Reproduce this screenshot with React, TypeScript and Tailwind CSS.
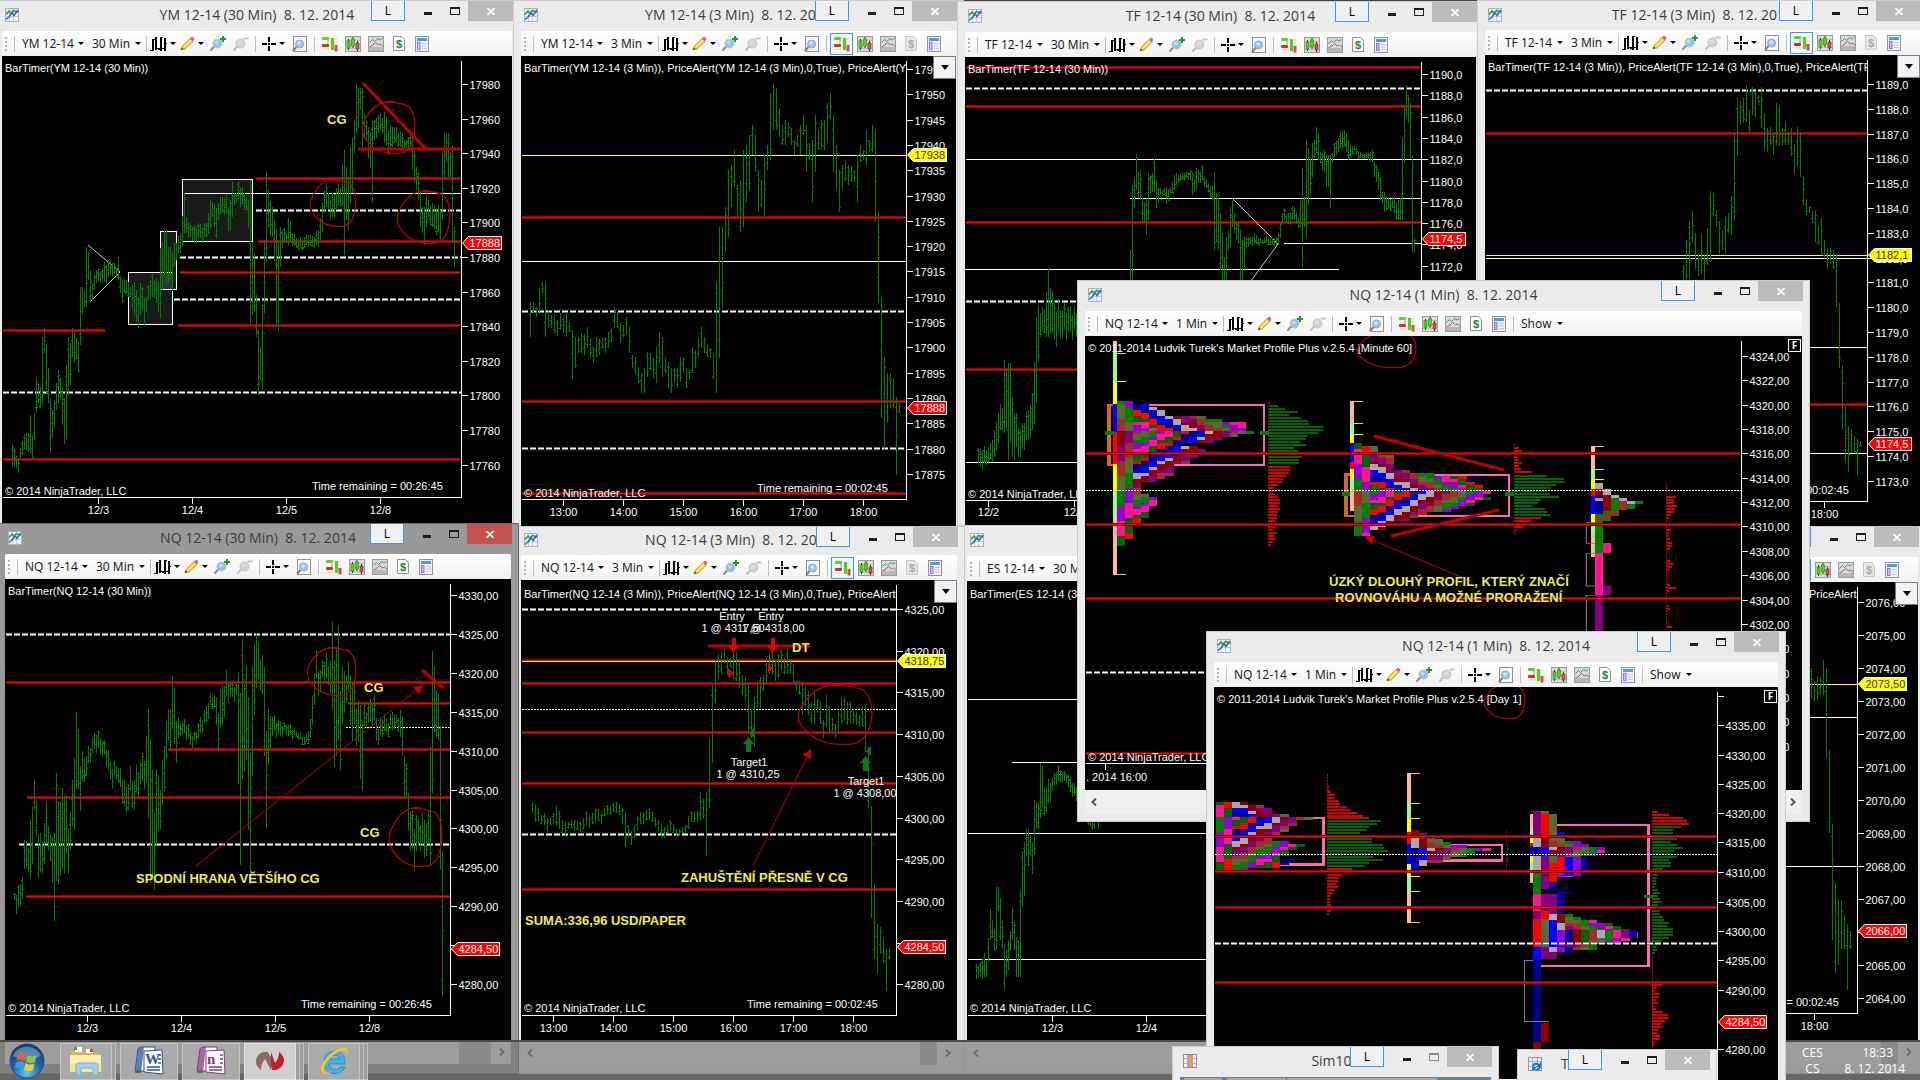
import React from "react";

/* ------------------------------------------------------------------ types */

type LineKind = "red" | "white" | "dash" | "dot" | "yellow";
type Line = [LineKind, number, number?, number?];
type Mark = [string, number];
type Tag = { text: string; y: number; kind: "red" | "yellow" };
type Grid = { ox: number; oy: number; kx: number; ky: number };
type Series = { grid: Grid; step: number; runs: number[][] };

const MAROON = "#8b0000";
const ANNOT = "#c00000";

/* ------------------------------------------------------------ price series */
/* every run is a flat list of x, high, low triples on the series' own grid */

const ym30: number[][] = [
  [37,1332,1397,43,1345,1400,49,1368,1405,55,1375,1418,61,1345,1380,67,1323,1365,79,1300,1350,88,1300,1360,91,1245,1360,97,1305,1378,103,1240,1320,109,1130,1240,115,1150,1210,121,1160,1225,127,1010,1215,133,985,1060,139,1033,1180,145,1105,1210,151,1197,1355,157,1230,1315,163,1200,1280,169,1150,1230,175,1110,1210,181,1130,1200,187,1165,1275,193,1195,1332,199,1095,1320,205,1010,1185,211,1030,1155,217,985,1070,223,1000,1085,229,1010,1080,235,1025,1120,241,860,1035,247,860,942,253,870,920,259,740,920,265,755,840,271,810,908,277,850,900,289,810,850,301,815,850,313,785,845,325,780,830,337,790,830,349,805,830,355,770,840,361,830,880,367,838,908,373,840,880,385,845,890,391,860,890,403,845,950,409,870,965,415,890,983,421,850,945,427,860,930,433,890,976,439,890,935,445,855,900,457,820,890,463,840,895,475,845,935,481,745,955,487,725,870,493,690,830,499,690,850,505,740,850,511,740,840,517,755,872,523,730,800,529,730,780,541,700,760,547,648,740,553,580,700,559,650,700,565,665,715,571,675,710,583,675,725,595,670,715,607,685,728,619,670,710,631,600,685,637,605,650,649,625,715,655,610,660,667,590,640,679,585,640,685,620,693,691,600,690,697,545,650,703,580,615,709,580,610,715,545,600,721,565,620,733,580,630,739,590,630,745,600,685,751,540,975,757,725,945,763,760,935,769,885,1010,775,990,1185,781,1040,1140,787,915,1170,793,720,940,799,515,785,805,570,680,811,600,710,817,620,710,823,660,785,829,690,980,835,730,992,841,680,800,847,690,745,859,700,730,865,655,735,877,700,740,889,715,745,901,710,745,913,710,745,925,705,740,943,710,745,955,690,740,961,655,720,967,610,695,973,570,640,979,550,620,985,580,630,991,600,660,997,580,650,1009,565,630,1021,560,620,1027,490,620,1033,450,765,1039,500,660,1045,530,690,1051,440,610,1057,415,580,1063,360,460,1069,250,400,1075,265,385,1081,265,330,1087,265,440,1093,340,410,1099,360,420,1105,380,475,1111,395,505,1117,360,605,1123,360,420,1135,345,400,1147,355,400,1153,335,430,1165,390,465,1171,375,445,1183,380,430,1195,400,440,1207,400,450,1219,420,445,1231,400,440,1237,410,510,1243,450,545,1249,500,570,1255,520,600,1261,575,680,1267,620,700,1273,620,735,1279,570,680,1285,600,655,1297,610,680,1309,630,705,1321,630,720,1327,460,660,1333,395,540,1339,400,485,1345,400,530,1351,455,530,1357,435,725,1363,680,800],
];

const ym3: number[][] = [
  [31,905,1012,40,905,940,49,920,950,58,865,935,67,845,880,76,845,1012,85,930,985,94,945,985,103,950,998,130,950,1000,139,935,1012,148,965,995,157,990,1137,166,1010,1105,175,1010,1060,184,1000,1060,202,980,1045,211,1015,1070,220,1040,1090,229,1010,1070,247,1010,1045,256,1010,1060,265,995,1045,274,985,1025,283,920,985,292,935,985,301,970,1028,310,975,1010,319,950,1005,328,980,1060,337,1065,1105,346,1070,1125,355,1100,1150,364,1120,1180,373,1105,1180,382,1055,1130,391,1060,1110,400,1075,1135,409,1040,1150,418,995,1090,427,1010,1130,436,1075,1120,445,1085,1165,454,1105,1180,463,1105,1145,472,1105,1165,481,1070,1145,490,1070,1120,499,1105,1165,508,1110,1140,517,1040,1120,526,1050,1105,535,1010,1070,544,980,1045,553,1010,1060,571,1045,1075,580,1060,1137,589,845,1180,598,680,1075,607,680,925,616,620,755,625,510,710,634,495,620,643,450,560,652,555,650,661,540,695,670,450,680,679,435,605,688,405,570,697,375,465,706,405,515,715,510,635,724,540,620,733,465,652,742,435,510,751,280,480,760,252,390,769,265,390,778,325,410,787,375,435,796,360,435,805,365,410,814,385,435,823,420,465,832,405,440,841,375,465,850,345,405,859,375,515,868,430,480,877,420,605,886,345,515,895,390,450,904,360,450,913,360,450,922,310,425,931,280,360,940,345,515,949,435,570,958,510,635,967,495,570,976,480,545,985,495,555,1003,510,545,1012,465,605,1021,435,485,1030,450,480,1039,390,495,1048,420,455,1057,375,455,1066,390,665,1075,632,910,1084,890,1255,1093,1070,1350,1102,1120,1270,1111,1120,1225,1120,1135,1225,1129,1190,1425,1138,1210,1240],
];

const tf30: number[][] = [
  [55,1345,1395,67,1350,1410,79,1350,1395,91,1330,1380,103,1290,1370,115,1240,1330,127,1225,1290,133,1080,1300,139,1110,1290,145,1090,1380,157,1190,1370,169,1240,1340,181,1290,1370,193,1270,1350,205,1230,1320,217,1180,1290,229,950,1210,241,940,1010,253,930,1000,265,808,1010,271,865,1000,283,900,1020,301,930,1010,325,920,1000,349,940,1010],
  [511,750,900,517,555,840,523,535,625,529,462,570,535,515,595,541,510,600,547,595,665,553,605,670,559,600,705,565,520,660,571,525,580,577,520,575,583,478,575,589,540,625,595,565,610,601,565,585,613,565,585,619,560,612,631,560,580,643,525,570,655,525,550,667,520,540,679,515,535,691,510,540,697,520,585,703,540,575,709,505,570,715,510,550,721,515,550,727,495,540,733,530,560,745,550,575,757,555,600,763,515,750,769,580,725,775,595,750,781,640,810,787,700,900,793,770,900,799,710,840,805,690,750,811,620,740,817,600,680,823,640,700,829,665,720,835,670,730,841,690,900,847,720,900,853,710,800,859,710,745,871,710,735,883,700,730,895,715,735,907,720,730,919,705,725,931,715,735,949,710,735,955,700,735,961,665,715,967,640,670,973,625,660,979,645,670,991,635,675,1003,620,660,1015,655,685,1021,600,680,1027,505,800,1033,590,680,1039,420,715,1045,445,615,1051,470,580,1057,430,530,1063,420,475,1069,380,460,1075,400,480,1081,455,490,1087,460,510,1093,450,515,1099,465,560,1105,465,560,1111,465,625,1117,460,490,1123,430,470,1135,415,455,1147,390,450,1153,390,440,1165,420,480,1171,435,470,1183,435,450,1195,455,478,1207,460,475,1219,460,475,1237,450,490,1243,485,530,1249,495,545,1261,530,600,1267,575,610,1273,575,635,1285,590,625,1297,590,625,1303,595,640,1315,600,660,1321,595,660,1327,415,660,1333,315,490,1339,255,350,1345,285,370,1351,310,475,1357,465,755,1363,715,760],
];

const tf3: number[][] = [
  [640,785,870,649,710,850,658,655,825,667,625,720,676,690,795,685,750,815,694,690,810,703,750,870,712,675,785,721,565,765,730,570,640,739,625,670,748,655,750,757,680,740,766,640,750,775,630,690,784,580,695,793,390,655,802,288,460,811,300,370,820,290,365,829,250,360,838,325,390,847,258,340,856,270,345,865,285,310,874,258,380,883,335,445,892,380,450,901,375,430,910,390,458,919,305,430,928,310,430,937,380,430,946,360,430,955,390,430,964,380,460,973,425,515,982,375,490,991,390,525,1000,520,605,1009,590,635,1018,610,630,1027,625,660,1036,625,715,1045,665,725,1054,645,750,1063,710,760,1072,735,795,1081,735,780,1090,740,795,1099,750,910,1108,895,1090,1117,1080,1270,1126,1200,1370,1135,1260,1395,1144,1270,1340,1153,1290,1340,1162,1300,1410,1171,1305,1320],
];

const nq30: number[][] = [
  [43,1045,1065,52,1045,1117,58,1020,1080,64,1020,1080,70,960,1025,76,860,960,82,905,955,88,930,1015,94,770,1018,100,728,800,106,750,850,112,810,920,118,915,1055,124,900,980,130,870,970,136,830,960,142,785,890,148,885,910,154,880,1010,160,885,1015,166,835,1195,172,740,985,178,745,970,184,850,1042,190,700,960,196,735,905,202,870,1025,208,840,945,214,770,880,220,735,880,226,545,795,232,560,740,238,650,805,244,660,760,250,670,740,262,650,700,274,620,660,286,590,640,298,600,650,310,620,660,322,640,690,334,690,745,346,680,720,358,695,740,370,725,800,376,745,820,382,760,830,388,690,770,394,720,780,400,735,820,412,690,765,424,685,745,430,625,720,436,690,750,442,545,750,448,462,865,454,745,1140,460,795,1000,466,750,980,472,705,905,478,730,840,484,745,855,490,645,790,496,580,690,502,540,640,508,550,630,514,480,610,520,430,600,526,510,655,532,570,660,538,570,600,550,560,600,562,570,610,574,600,635,586,600,625,598,560,610,610,550,580,622,510,560,634,490,520,646,490,530,652,510,630,658,520,610,664,460,580,670,460,555,682,435,500,694,465,500,700,455,500,712,470,500,718,390,975,724,460,840,730,365,770,736,365,480,742,470,880,748,600,930,754,570,980,760,410,620,766,245,440,772,355,465,778,375,475,784,365,435,790,405,550,796,440,795,802,600,790,808,530,660,814,545,600,826,560,600,838,565,610,850,570,595,862,570,600,874,580,610,886,590,605,898,595,615,910,610,630,922,595,625,934,550,610,940,440,540,946,380,460,952,385,460,958,440,500,964,400,460,970,405,440,976,375,450,982,390,460,988,430,465,994,350,490,1000,280,635,1006,400,640,1012,310,680,1018,390,660,1024,450,620,1030,430,580,1036,415,500,1042,435,500,1048,390,480,1054,450,640,1060,470,600,1066,475,580,1072,540,640,1078,510,640,1084,520,805,1090,530,640,1096,540,580,1102,520,570,1114,505,570,1120,490,550,1126,510,600,1132,590,630,1138,570,620,1150,540,590,1162,565,605,1180,530,580,1192,560,580,1204,525,620,1210,590,720,1216,680,790,1222,725,810,1228,790,920,1234,815,910,1240,850,970,1246,830,945,1258,850,910,1264,840,920,1276,830,945,1282,850,920,1288,800,920,1294,420,965,1300,430,680,1306,420,540,1312,490,630,1318,545,660,1324,580,1275,1330,1200,1320],
];

const nq3: number[][] = [
  [37,790,820,46,795,845,55,805,845,64,825,850,73,820,855,82,835,880,91,835,855,100,820,850,109,800,855,118,815,865,127,840,880,136,845,885,145,845,865,163,840,870,181,845,870,199,815,855,217,820,850,226,805,845,244,820,850,253,805,830,271,800,825,289,790,820,298,795,825,307,805,850,316,815,915,325,855,890,334,870,910,343,855,890,352,830,870,370,820,850,388,805,840,397,815,845,406,835,860,415,840,870,424,850,890,442,855,875,451,840,870,460,850,875,469,865,885,487,860,875,496,855,875,505,830,865,514,815,845,532,815,845,541,762,840,550,780,835,559,762,940,568,610,805,577,455,680,586,390,515,595,375,445,604,370,430,613,360,400,622,385,435,631,385,415,640,370,445,649,370,450,658,395,470,667,435,490,676,440,510,685,455,600,694,530,610,703,495,635,712,460,525,721,440,525,730,435,480,739,385,460,748,375,430,757,370,430,766,390,450,775,375,445,784,360,420,793,385,430,802,360,430,811,390,430,820,400,460,829,450,480,838,450,490,847,450,545,856,465,520,865,480,545,874,510,570,883,475,570,892,500,540,901,510,570,910,560,610,919,490,580,928,520,600,937,555,595,946,570,610,955,535,600,964,495,570,973,495,560,982,510,575,991,510,570,1000,530,570,1018,545,580,1027,520,580,1036,520,650,1045,635,805,1054,800,1115,1063,1020,1230,1072,1130,1270,1081,1140,1215,1090,1170,1240,1099,1200,1320,1108,1195,1230],
];

const es30: number[][] = [
  [49,1255,1295,55,1260,1290,73,1225,1290,79,1245,1290,85,1185,1250,91,1105,1190,97,1135,1185,103,1160,1220,109,1045,1215,115,1045,1110,121,1075,1190,127,1135,1210,133,1200,1325,139,1215,1290,145,1190,1270,151,1165,1220,157,1100,1190,163,1140,1215,169,1180,1290,175,1190,1290,181,1055,1290,187,950,1100,193,925,1070,199,890,965,205,890,990,211,905,960,217,925,1010,223,810,960,229,815,890,235,820,890,241,710,860,247,720,830,253,775,855,265,755,820,277,750,785,289,735,770,295,715,760,307,735,765,319,740,765,331,750,790,343,765,800,355,780,820,391,800,880,415,820,888],
];

const es3: number[][] = [
  [124,415,500,133,450,508,142,438,508,151,440,490,160,392,490,169,415,665,178,645,875,187,850,1175,196,1015,1268,205,1060,1245,214,1065,1200,223,1105,1200,232,1130,1315,241,1150,1200],
];

function Bars({ grid, step, runs }: Series) {
  let d = "";
  for (const run of runs) {
    let k = 0;
    const last = run[run.length - 3];
    for (let x = run[0]; x <= last; x += step) {
      while (k + 5 < run.length && run[k + 3] <= x) k += 3;
      let hi = run[k + 1];
      let lo = run[k + 2];
      if (x - run[k] > 1 && k + 5 < run.length) {
        const t = (x - run[k]) / (run[k + 3] - run[k]);
        const wobble = Math.sin(x * 1.7) * 0.22 * (lo - hi);
        hi = hi + (run[k + 4] - hi) * t + wobble;
        lo = lo + (run[k + 5] - lo) * t + wobble;
      }
      const px = Math.floor(grid.ox + x / grid.kx) + 0.5;
      const a = Math.round(grid.oy + hi / grid.ky);
      const b = Math.round(grid.oy + lo / grid.ky);
      const open = Math.round(a + (b - a) * (0.5 + 0.4 * Math.sin(x))) + 0.5;
      const close = Math.round(a + (b - a) * (0.5 - 0.4 * Math.sin(x + 2))) + 0.5;
      d += `M${px} ${a}V${b}M${px - 1.5} ${open}h1M${px + 0.5} ${close}h1`;
    }
  }
  return <path d={d} stroke="#008000" fill="none" shapeRendering="crispEdges" />;
}

/* ------------------------------------------------------------ chart pieces */

function HLine({ line, from, to }: { line: Line; from: number; to: number }) {
  const [kind, y, a = from, b = to] = line;
  const p = { x1: a, x2: b, y1: y, y2: y, shapeRendering: "crispEdges" as const };
  if (kind === "red")
    return (
      <>
        <line {...p} stroke={MAROON} strokeWidth={3} />
        <line {...p} stroke="#ff0000" />
      </>
    );
  if (kind === "dash")
    return (
      <>
        <line {...p} stroke="#808080" strokeWidth={3} strokeDasharray="6 2" />
        <line {...p} stroke="#fff" strokeDasharray="6 2" />
      </>
    );
  if (kind === "dot") return <line {...p} stroke="#fff" strokeDasharray="2 1" />;
  return <line {...p} stroke={kind === "yellow" ? "#ffff00" : "#fff"} />;
}

function PriceTag({ tag, x }: { tag: Tag; x: number }) {
  const w = tag.text.length > 6 ? 48 : tag.text.length > 5 ? 43 : 39;
  const { y } = tag;
  const red = tag.kind === "red";
  return (
    <>
      <path
        d={`M${x + 1} ${y}L${x + 7} ${y - 6.5}H${x + 1 + w}V${y + 6.5}H${x + 7}Z`}
        fill={red ? "#ff0000" : "#ffff00"}
        stroke="#fff"
      />
      <text x={x + 8} y={y + 4} fill={red ? "#fff" : "#4a2a00"}>
        {tag.text}
      </text>
    </>
  );
}

function Scribble({ x0, y0, x1, y1 }: { x0: number; y0: number; x1: number; y1: number }) {
  const w = x1 - x0;
  const h = y1 - y0;
  const X = (f: number) => x0 + w * f;
  const Y = (f: number) => y0 + h * f;
  return (
    <path
      d={`M${X(0.62)} ${Y(0.02)}C${X(0.4)} ${Y(-0.03)} ${X(0.2)} ${Y(0.1)} ${X(0.1)} ${Y(0.28)}C${X(-0.06)} ${Y(0.5)} ${X(0)} ${Y(0.65)} ${X(0.12)} ${Y(0.78)}C${X(0.25)} ${Y(0.95)} ${X(0.45)} ${Y(1)} ${X(0.68)} ${Y(0.99)}C${X(0.9)} ${Y(0.97)} ${X(0.95)} ${Y(0.8)} ${X(0.99)} ${Y(0.6)}C${X(1.02)} ${Y(0.35)} ${X(0.98)} ${Y(0.2)} ${X(0.88)} ${Y(0.1)}C${X(0.75)} ${Y(0.02)} ${X(0.55)} ${Y(0.03)} ${X(0.45)} ${Y(0.02)}`}
      fill="none"
      stroke={ANNOT}
      strokeWidth={1.2}
    />
  );
}

function Stroke({ p }: { p: [number, number, number, number] }) {
  return <line x1={p[0]} y1={p[1]} x2={p[2]} y2={p[3]} stroke={ANNOT} strokeWidth={3} />;
}

function Arrow({ p }: { p: [number, number, number, number] }) {
  const [x1, y1, x2, y2] = p;
  const len = Math.hypot(x2 - x1, y2 - y1);
  const ux = (x2 - x1) / len;
  const uy = (y2 - y1) / len;
  const bx = x2 - ux * 9;
  const by = y2 - uy * 9;
  return (
    <>
      <line x1={x1} y1={y1} x2={bx} y2={by} stroke={ANNOT} />
      <polygon
        points={`${x2},${y2} ${bx - uy * 5},${by + ux * 5} ${bx + uy * 5},${by - ux * 5}`}
        fill={ANNOT}
      />
    </>
  );
}

function Note({ x, y, children }: { x: number; y: number; children: string }) {
  return (
    <text x={x} y={y} fill="#f0f040" fontSize={13} fontWeight={700}>
      {children}
    </text>
  );
}

type ChartProps = {
  x: number;
  y: number;
  w: number;
  h: number;
  axis: number;
  base: number;
  prices: Mark[];
  times?: Mark[];
  timeY?: number;
  lines: Line[];
  tags?: Tag[];
  series?: Series;
  header: string;
  headerY: number;
  headerX?: number;
  copyY?: number;
  remain?: [string, number, number];
  under?: React.ReactNode;
  mid?: React.ReactNode;
  children?: React.ReactNode;
};

function Chart(c: ChartProps) {
  const right = c.x + c.w;
  return (
    <svg
      className="block shrink-0"
      width={c.w}
      height={c.h}
      viewBox={`${c.x} ${c.y} ${c.w} ${c.h}`}
      fontFamily="'Liberation Sans', Arial, sans-serif"
      fontSize={11}
    >
      <rect x={c.x} y={c.y} width={c.w} height={c.h} fill="#000" />
      {c.under}
      {c.lines.map((l, i) => (
        <HLine key={i} line={l} from={c.x + 1} to={c.axis} />
      ))}
      {c.mid}
      {c.series && <Bars {...c.series} />}
      <text x={c.headerX ?? c.x + 3} y={c.headerY} fill="#fff">
        {c.header}
      </text>
      {c.copyY && (
        <text x={c.x + 3} y={c.copyY} fill="#fff">
          © 2014 NinjaTrader, LLC
        </text>
      )}
      {c.remain && (
        <text x={c.remain[1]} y={c.remain[2]} fill="#fff">
          Time remaining = {c.remain[0]}
        </text>
      )}
      {c.children}
      <rect x={c.axis + 0.5} y={c.y} width={right - c.axis} height={c.h} fill="#000" />
      <g stroke="#fff" shapeRendering="crispEdges">
        <line x1={c.axis} x2={c.axis} y1={c.y + 5} y2={c.base} />
        <line x1={c.x + 1} x2={c.axis + 0.5} y1={c.base} y2={c.base} />
        {c.prices.map(([t, y]) => (
          <line key={t + y} x1={c.axis} x2={c.axis + 6} y1={y - 0.5} y2={y - 0.5} />
        ))}
        {c.times?.map(([t, x]) => (
          <line key={t} x1={x} x2={x} y1={c.base} y2={c.base + 6} />
        ))}
      </g>
      <g fill="#fff">
        {c.prices.map(([t, y]) => (
          <text key={t + y} x={c.axis + 8} y={y + 4}>
            {t}
          </text>
        ))}
        {c.times?.map(([t, x]) => (
          <text key={t} x={x} y={c.timeY} textAnchor="middle">
            {t}
          </text>
        ))}
      </g>
      {c.tags?.map((t) => (
        <PriceTag key={t.text} tag={t} x={c.axis} />
      ))}
    </svg>
  );
}

/* ---------------------------------------------------------- market profile */

const TPO = ["#8b0000", "#006400", "#a52a2a", "#00008b", "#008000", "#a9a9a9", "#ff1493", "#800080", "#ff0000", "#556b2f", "#0000ff", "#9400d3"];

/* rows: flat list of y, cell count pairs; letters shift left away from the widest row */
function Profile({ x, cell, rows, end, seed }: { x: number; cell: number; rows: number[]; end: number; seed: number }) {
  let peak = 0;
  for (let i = 0; i < rows.length; i += 2) if (rows[i + 1] > rows[peak + 1]) peak = i;
  const out: React.ReactNode[] = [];
  for (let i = 0; i < rows.length; i += 2) {
    const next = i + 2 < rows.length ? rows[i + 2] : end;
    for (let yy = rows[i]; yy < next; yy += 9) {
      const r = Math.round((yy - rows[peak]) / 9);
      const dist = Math.abs(r);
      for (let c = 0; c < rows[i + 1]; c++) {
        const shift = c < 2 ? Math.floor((dist + c) / 5) : Math.floor(dist * 0.6 + (c % 3) * 0.3);
        const idx = ((c + shift) * 7 + (r < 0 ? 2 : 0) + seed) % TPO.length;
        out.push(<rect key={`${yy}-${c}`} x={x + c * cell} y={yy} width={cell + 0.3} height={9.5} fill={TPO[idx]} />);
      }
    }
  }
  return <>{out}</>;
}

/* segs: colour and lower edge, ticks: y positions of the short right marks */
function RangeBar({ x, top, segs, ticks, w, tick }: { x: number; top: number; segs: [string, number][]; ticks: [string, number][]; w: number; tick: number }) {
  return (
    <>
      {segs.map(([c, y], i) => {
        const a = i ? segs[i - 1][1] : top;
        return <rect key={i} x={x} y={a} width={w} height={y - a} fill={c} />;
      })}
      {ticks.map(([c, y]) => (
        <rect key={y} x={x} y={y - 1.5} width={tick} height={3} fill={c} />
      ))}
    </>
  );
}

/* rows: y, length pairs; drawn green between the two limits, red elsewhere */
function Volume({ x, rows, green }: { x: number; rows: number[]; green: [number, number] }) {
  const out: React.ReactNode[] = [];
  for (let i = 0; i < rows.length; i += 2) {
    const y = rows[i];
    const inside = y >= green[0] && y <= green[1];
    out.push(<rect key={y} x={x} y={y - 3} width={rows[i + 1]} height={6} fill={inside ? "#006400" : "#d00000"} />);
  }
  return <>{out}</>;
}

const PEACH = "#ffb994";
const MINT = "#98fb98";
const YEL = "#ffff00";

function HourProfiles() {
  return (
    <g transform="translate(1070 280) scale(0.472 0.3333)" shapeRendering="crispEdges">
      <path d="M100 375H82V555H100" fill="none" stroke="#d2691e" strokeWidth={8} />
      <path d="M150 375H411V554H150" fill="none" stroke="#ff69b4" strokeWidth={6} />
      <path d="M602 584H585V709H602" fill="none" stroke="#d2691e" strokeWidth={7} />
      <path d="M700 584H930V709H700" fill="none" stroke="#ff69b4" strokeWidth={6} />
      <RangeBar x={91} top={183} w={9} tick={28}
        segs={[[PEACH, 218], [MINT, 303], [YEL, 372], ["#0000ff", 457], ["#ff0000", 551], [YEL, 632], [MINT, 716], [PEACH, 885]]}
        ticks={[[MINT, 220], [YEL, 304], [PEACH, 883]]} />
      <Profile x={100} cell={17} seed={0} end={797}
        rows={[362,2,371,4,380,5,389,6,408,11,417,13,426,16,453,17,462,15,471,13,480,12,489,8,498,10,507,11,525,10,534,9,552,7,588,6,597,5,606,3,642,4,651,5,678,4,714,3,732,2,770,1]} />
      <Volume x={420} green={[372, 556]}
        rows={[369,3,378,20,387,35,396,62,405,43,414,70,423,85,432,87,441,115,450,116,459,105,468,83,477,80,486,67,495,80,504,55,513,62,522,62,531,72,540,65,549,65,561,47,570,47,579,45,588,40,597,32,606,30,615,20,624,12,633,17,642,15,651,20,660,25,669,25,678,22,687,25,696,20,705,18,714,18,723,15,732,18,741,15,750,12,759,18,768,15,777,15,786,10,795,5]} />
      <RangeBar x={593} top={364} w={9} tick={28}
        segs={[[PEACH, 430], [MINT, 463], [YEL, 490], ["#0000ff", 547], ["#ff0000", 567], [YEL, 596], [MINT, 625], [PEACH, 692]]}
        ticks={[[PEACH, 365], [MINT, 430], [YEL, 463]]} />
      <Profile x={602} cell={17} seed={2} end={762}
        rows={[490,1,499,3,517,4,526,5,571,7,580,10,589,14,598,15,616,16,634,17,643,16,652,17,661,15,679,13,688,12,697,9,706,8,715,7,724,5,733,4,751,2]} />
      <Volume x={940} green={[582, 708]}
        rows={[495,3,504,12,513,18,522,14,531,8,540,12,549,18,558,12,567,16,576,38,587,70,596,106,605,108,614,89,623,80,632,70,641,76,650,95,659,57,668,51,677,38,686,66,695,70,704,76,713,57,722,36,731,17,740,20,749,6,758,3]} />
      <RangeBar x={1104} top={499} w={8} tick={28}
        segs={[[PEACH, 568], [MINT, 598], [YEL, 628], ["#ff0000", 647], ["#0000ff", 702], [YEL, 732], [MINT, 762], [PEACH, 830]]}
        ticks={[[PEACH, 500], [MINT, 569], [YEL, 599]]} />
      <g>
        <rect x={1112} y={608} width={17} height={18} fill="#a9a9a9" />
        <rect x={1112} y={626} width={17} height={20} fill="#8b0000" />
        <rect x={1129} y={626} width={17} height={18} fill="#a9a9a9" />
        <rect x={1112} y={646} width={17} height={56} fill="#00008b" />
        <rect x={1112} y={654} width={17} height={9} fill="#bc8f8f" />
        <rect x={1129} y={644} width={17} height={48} fill="#8b0000" />
        <rect x={1146} y={644} width={17} height={9} fill="#a9a9a9" />
        <rect x={1146} y={653} width={17} height={40} fill="#008000" />
        <rect x={1163} y={653} width={17} height={9} fill="#a9a9a9" />
        <rect x={1163} y={662} width={17} height={28} fill="#a52a2a" />
        <rect x={1180} y={662} width={17} height={9} fill="#a9a9a9" />
        <rect x={1180} y={671} width={17} height={16} fill="#008000" />
        <rect x={1197} y={664} width={17} height={8} fill="#008000" />
        <rect x={1129} y={692} width={17} height={9} fill="#008000" />
        <rect x={1146} y={693} width={17} height={14} fill="#a52a2a" />
        <rect x={1112} y={702} width={17} height={9} fill="#008000" />
        <rect x={1129} y={701} width={17} height={15} fill="#a52a2a" />
        <rect x={1112} y={710} width={17} height={14} fill="#a52a2a" />
        <rect x={1129} y={714} width={17} height={10} fill="#008000" />
      </g>
      <rect x={1112} y={724} width={17} height={96} fill="#008000" />
      <rect x={1112} y={820} width={17} height={125} fill="#ff1493" />
      <rect x={1112} y={945} width={17} height={110} fill="#800080" />
      <rect x={1129} y={790} width={17} height={28} fill="#ff1493" />
      <rect x={1129} y={917} width={17} height={28} fill="#800080" />
      <path d="M1112 728H1094V790H1112M1112 820H1094V918H1112M1112 946H1094V1060" fill="none" stroke="#777" strokeWidth={2.5} />
      <line x1={1264} x2={1264} y1={612} y2={1060} stroke="#d00000" strokeWidth={2.5} strokeDasharray="6 3" />
      <Volume x={1264} green={[0, 0]}
        rows={[651,20,660,15,669,15,678,22,687,18,696,15,705,10,714,5,750,10,759,5,768,5,777,8,790,12,799,12,808,8,842,8,852,15,860,12,869,5,915,8,924,20,933,5,978,5,987,8,1040,12]} />
      <g fill="#008000">
        <rect x={75} y={453} width={18} height={12} />
        <rect x={403} y={453} width={18} height={12} />
        <rect x={576} y={635} width={18} height={12} />
        <rect x={922} y={635} width={18} height={12} />
      </g>
    </g>
  );
}

function DayProfiles() {
  return (
    <g transform="translate(1200 620) scale(0.3827 0.3333)" shapeRendering="crispEdges">
      <path d="M190 594H322V733H190" fill="none" stroke="#ff69b4" strokeWidth={8} />
      <Profile x={42} cell={21} seed={4} end={752}
        rows={[545,4,554,6,563,7,581,9,590,12,599,10,617,9,635,8,644,5,653,7,662,9,671,11,680,10,689,9,707,8,716,10,725,9,734,8,743,4]} />
      <Volume x={332} green={[598, 740]}
        rows={[464,3,473,3,482,3,491,3,500,4,509,6,515,10,524,22,533,22,542,30,551,35,560,52,569,62,578,78,587,95,593,110,602,140,611,130,620,110,629,105,638,85,647,105,656,118,665,118,674,145,683,150,692,158,701,135,710,120,719,145,728,110,737,100,746,65,755,50,764,40,773,32,782,28,791,25,800,28,809,20,818,14,827,10,836,8,845,8,854,10,863,8,872,10,881,6]} />
      <path d="M620 675H789V722H620" fill="none" stroke="#ff69b4" strokeWidth={7} />
      <RangeBar x={541} top={460} w={10} tick={34}
        segs={[[PEACH, 550], [MINT, 595], [YEL, 636], ["#ff0000", 672], ["#0000ff", 732], [YEL, 770], [MINT, 814], [PEACH, 908]]}
        ticks={[[PEACH, 461], [MINT, 550], [YEL, 595], [YEL, 769], [MINT, 814], [PEACH, 907]]} />
      <Profile x={551} cell={21} seed={3} end={747}
        rows={[630,1,639,2,648,3,657,4,666,5,675,7,684,10,693,8,702,7,711,5,720,4,729,2,738,1]} />
      <path d="M801 633V672M801 705V748" stroke="#d00000" strokeWidth={2.6} strokeDasharray="6 3" />
      <Volume x={801} green={[0, 2000]} rows={[678,5,687,7,696,4,705,3,714,3,723,5]} />
      <path d="M912 615H1171V1038H891" fill="none" stroke="#ff69b4" strokeWidth={8} />
      <RangeBar x={861} top={582} w={9} tick={9}
        segs={[[PEACH, 625], [MINT, 655], [YEL, 668], ["#ff0000", 678], ["#0000ff", 708], [YEL, 727], [MINT, 758], [PEACH, 789]]}
        ticks={[]} />
      <Profile x={870} cell={21} seed={3} end={765} rows={[654,4,663,6,672,7,681,9,690,9,699,8,708,6,717,7,753,5]} />
      <g>
        <rect x={870} y={573} width={21} height={80} fill="#800080" />
        <rect x={891} y={573} width={21} height={9} fill="#556b2f" />
        <rect x={912} y={582} width={21} height={72} fill="#556b2f" />
        <rect x={891} y={582} width={21} height={72} fill="#ff0000" />
        <rect x={933} y={636} width={21} height={18} fill="#0000ff" />
        <rect x={870} y={708} width={21} height={46} fill="#a9a9a9" />
        <rect x={891} y={708} width={21} height={100} fill="#800080" />
        <rect x={912} y={708} width={21} height={20} fill="#556b2f" />
        <rect x={912} y={728} width={21} height={58} fill="#ff0000" />
        <rect x={933} y={712} width={21} height={48} fill="#ff0000" />
        <rect x={954} y={712} width={21} height={55} fill="#0000ff" />
        <rect x={975} y={712} width={21} height={55} fill="#9400d3" />
        <rect x={996} y={712} width={21} height={38} fill="#00008b" />
        <rect x={870} y={754} width={21} height={68} fill="#008000" />
        <rect x={912} y={786} width={21} height={24} fill="#00008b" />
        <rect x={870} y={822} width={42} height={52} fill="#ff1493" />
        <rect x={891} y={822} width={42} height={78} fill="#800080" />
        <rect x={933} y={808} width={21} height={70} fill="#00008b" />
        <rect x={954} y={817} width={21} height={4} fill="#00008b" />
        <rect x={870} y={874} width={21} height={24} fill="#800080" />
      </g>
      <Profile x={912} cell={21} seed={8} end={982} rows={[882,3,891,4,900,6,909,8,918,9,927,10,936,11,954,10,963,9,972,6]} />
      <rect x={891} y={874} width={21} height={24} fill="#ff0000" />
      <rect x={870} y={898} width={21} height={84} fill="#ff0000" />
      <rect x={891} y={898} width={21} height={84} fill="#556b2f" />
      <rect x={912} y={930} width={21} height={52} fill="#0000ff" />
      <rect x={933} y={930} width={21} height={48} fill="#9400d3" />
      <rect x={954} y={930} width={21} height={40} fill="#00008b" />
      <rect x={975} y={930} width={21} height={40} fill="#8b0000" />
      <rect x={996} y={930} width={21} height={36} fill="#006400" />
      <rect x={1017} y={930} width={21} height={24} fill="#a52a2a" />
      <rect x={1038} y={930} width={21} height={24} fill="#a9a9a9" />
      <rect x={1059} y={930} width={21} height={24} fill="#008000" />
      <rect x={1080} y={930} width={21} height={24} fill="#ff1493" />
      <rect x={1101} y={930} width={21} height={24} fill="#800080" />
      <rect x={1122} y={930} width={20} height={24} fill="#00008b" />
      <rect x={891} y={982} width={42} height={34} fill="#800080" />
      <rect x={912} y={982} width={21} height={14} fill="#a9a9a9" />
      <rect x={933} y={982} width={21} height={14} fill="#9400d3" />
      <rect x={954} y={982} width={21} height={14} fill="#00008b" />
      <rect x={870} y={982} width={21} height={40} fill="#0000ff" />
      <rect x={870} y={1021} width={21} height={244} fill="#00008b" />
      <rect x={870} y={1265} width={21} height={22} fill="#8b0000" />
      <rect x={891} y={1208} width={21} height={57} fill="#8b0000" />
      <path d="M870 1021H848V1206H912" fill="none" stroke="#888" strokeWidth={2.5} />
      <line x1={1182} x2={1182} y1={1009} y2={1285} stroke="#d00000" strokeWidth={2.6} strokeDasharray="6 3" />
      <Volume x={1181} green={[618, 1010]}
        rows={[577,15,586,45,595,80,604,92,613,97,622,75,631,55,640,55,649,50,658,65,667,50,676,65,685,80,694,58,703,50,712,65,721,45,730,50,739,50,748,30,757,20,766,15,775,12,784,10,793,10,802,8,811,15,820,22,829,15,838,20,847,25,856,15,865,12,874,20,883,20,892,30,901,32,910,45,919,40,928,55,937,55,946,55,955,45,964,25,973,15,982,10,991,12,1000,8,1087,22,1096,25,1105,12,1114,8,1123,22,1132,18,1141,10,1150,15,1159,5,1168,10,1177,30,1186,42,1195,45,1204,35,1213,25,1222,28,1231,15,1240,12,1249,22,1258,20,1267,8,1276,5]} />
      <rect x={1160} y={824} width={24} height={10} fill="#008000" />
    </g>
  );
}

/* ------------------------------------------------------------------- icons */

const AppIcon = () => (
  <svg width="14" height="14" viewBox="0 0 14 14" className="block">
    <rect x=".5" y=".5" width="13" height="13" fill="#eef2fb" stroke="#a9aec9" />
    <path d="M4.5 1v12M8.5 1v12M1 4.5h12M1 8.5h12" stroke="#c3c9e6" />
    <path d="M1 6.5 4 3l2 2 2.5-2.5L13 4" fill="none" stroke="#3aa52e" strokeWidth="1.6" />
    <path d="M1 11.5 4 9l3-4 2 2.5 4-5.5" fill="none" stroke="#2c6fb5" strokeWidth="1.6" />
  </svg>
);
const GridIcon = ({ blue = false }: { blue?: boolean }) => (
  <svg width="14" height="14" viewBox="0 0 14 14" className="block">
    <rect x=".5" y=".5" width="13" height="13" fill="#eeeefb" stroke="#8f8f9f" />
    {!blue && <rect x="5" y="1" width="4" height="12" fill="#f79a2a" />}
    <path d="M4.5 1v12M9.5 1v12M1 4.5h12M1 9.5h12" stroke="#a7a7cf" />
    {blue && <path d="M4 9c1-4 5-4 7-2l2-2v5H8l2-1.5C8 7 7 8 6 9zM13 10c-1 4-5 4-7 2.5L4 14v-4h5l-2 1.5c2 1 3 0 4-1.5z" fill="#0b74d8" />}
  </svg>
);
const Caret = () => (
  <svg width="6" height="3" viewBox="0 0 6 3" className="pointer-events-none block shrink-0">
    <path d="M0 0h6L3 3z" fill="#000" />
  </svg>
);
const BarsIcon = () => (
  <svg width="17" height="16" viewBox="0 0 17 16" shapeRendering="crispEdges">
    <path d="M3 3v12M6 1v13M11 1v14M15 2v13" stroke="#000" strokeWidth="2" />
    <path d="M0 14.5h2M3 3.5h3M7 12.5h3M8 13.5h2M12 1.5h1M12 12.5h2M16 7.5h1" stroke="#000" />
  </svg>
);
const PencilIcon = () => (
  <svg width="15" height="15" viewBox="0 0 15 15">
    <path d="m1 14 1.5-4L10 2.500l3 3L5 13z" fill="#ffd83a" stroke="#b7861b" strokeWidth=".8" />
    <path d="M10 2.5 11.5 1c1-.8 3.5 1.5 2.5 2.8L13 5.5z" fill="#e8615a" />
    <path d="m1 14 1-2.500L3.500 13z" fill="#333" />
    <path d="M3.5 11.5 11 4" stroke="#fff1a0" />
  </svg>
);
const LensIcon = ({ plus }: { plus: boolean }) => (
  <svg width="16" height="15" viewBox="0 0 16 15">
    <path d="m1 14 4-4.5" stroke={plus ? "#8a8f98" : "#c2c2c2"} strokeWidth="2" strokeLinecap="round" />
    <circle cx="7.5" cy="7.5" r="4.5" fill={plus ? "#8fc0ea" : "#d2d2d2"} stroke={plus ? "#b8c4d4" : "#c4c4c4"} />
    <circle cx="6.8" cy="6.5" r="2" fill={plus ? "#bcdcf8" : "#dedede"} />
    {plus ? <path d="M13 0v6M10 3h6" stroke="#10a020" strokeWidth="2" /> : <path d="M10.5 2.5h5" stroke="#c4c4c4" strokeWidth="2" />}
  </svg>
);
const CrossIcon = () => (
  <svg width="14" height="14" viewBox="0 0 14 14" shapeRendering="crispEdges">
    <path d="M7 0v5M7 9v5M0 7h5M9 7h5" stroke="#000" strokeWidth="2" />
    <rect x="6" y="6" width="2" height="2" />
  </svg>
);
const PageLensIcon = () => (
  <svg width="15" height="16" viewBox="0 0 15 16">
    <rect x="1.500" y=".5" width="13" height="15" fill="#f4f7fb" stroke="#8f8f8f" />
    <path d="m1 15 3.5-4" stroke="#7a7f88" strokeWidth="2" />
    <circle cx="7.5" cy="8" r="4" fill="#9cc6ea" stroke="#8ba6c4" />
    <circle cx="7" cy="7" r="1.8" fill="#cde6fa" />
  </svg>
);
const OrdersIcon = () => (
  <svg width="16" height="16" viewBox="0 0 16 16">
    <path d="M8 3h7M8 6h7M8 9h7M1 13h7" stroke="#cfcfcf" />
    <rect x="0" y="1" width="7" height="3" rx="1" fill="#5ad816" />
    <rect x="0" y="8" width="7" height="3" rx="1" fill="#e02a1a" />
    <path d="M6 4v4" stroke="#999" />
    <rect x="9" y="2" width="3" height="12" fill="#53d01a" />
    <rect x="12.5" y="9" width="3" height="6.5" fill="#df4a42" />
  </svg>
);
const CandlesIcon = () => (
  <svg width="16" height="16" viewBox="0 0 16 16">
    <rect x=".5" y=".5" width="15" height="15" fill="#dcdcdc" stroke="#9a9a9a" />
    <path d="M1 4.500h14M1 8.500h14M1 12.500h14" stroke="#bcbcbc" />
    <path d="M3.500 3v11M8 1v11M12.500 5v10" stroke="#333" />
    <rect x="2" y="5" width="3" height="7" fill="#4dd412" stroke="#2b8a08" strokeWidth=".6" />
    <rect x="6.500" y="3" width="3" height="7" fill="#4dd412" stroke="#2b8a08" strokeWidth=".6" />
    <rect x="11" y="7" width="3" height="6" fill="#e84b3c" stroke="#952015" strokeWidth=".6" />
  </svg>
);
const IndicatorIcon = () => (
  <svg width="16" height="16" viewBox="0 0 16 16">
    <rect x=".5" y=".5" width="15" height="15" fill="#d6dadb" stroke="#9a9a9a" />
    <rect x="1" y="11" width="14" height="4" fill="#b4b8ba" />
    <path d="m1.500 6.500 3-3 2 2 3.500-3 2 1.500 2.500-1.500" fill="none" stroke="#25a584" />
    <path d="m1.500 11 3.500-2 2.500-2.500 3 2.500 2-1 2.500 2" fill="none" stroke="#e04a4a" />
  </svg>
);
const MoneyIcon = ({ off }: { off: boolean }) => (
  <svg width="12" height="15" viewBox="0 0 12 15">
    <path d="M.5.500h8l3 3v11H.5z" fill={off ? "#e6e6e6" : "#fff"} stroke={off ? "#c9c9c9" : "#8f8f8f"} />
    <text x="6" y="11.500" textAnchor="middle" fontSize="11" fontWeight="700" fontFamily="'Liberation Sans', Arial, sans-serif" fill={off ? "#aaa" : "#118a22"}>$</text>
  </svg>
);
const PropsIcon = () => (
  <svg width="14" height="16" viewBox="0 0 14 16">
    <rect x=".5" y=".5" width="13" height="15" fill="#f3f3fb" stroke="#8d93ad" />
    <rect x="2" y="2" width="10" height="3" fill="#45a0dc" />
    <rect x="2.5" y="6.5" width="2.5" height="7" fill="#d9b8ff" stroke="#9a6bf0" />
    <path d="M7 7.500h5M7 10h5M7 12.500h5" stroke="#c3c8dc" />
  </svg>
);
const Chevron = ({ back = false }: { back?: boolean }) => (
  <svg width="6" height="8" viewBox="0 0 6 8" className="block">
    <path d={back ? "M5 .5 1.5 4 5 7.5" : "m1 .5 3.500 3.500L1 7.500"} fill="none" stroke="#555" strokeWidth="2" />
  </svg>
);

/* ----------------------------------------------------------------- toolbar */

const Sep = () => <span className="mx-[3px] h-4 w-px shrink-0 bg-[#bdbdbd]" />;

function Drop({ label, value }: { label: string; value: string }) {
  return (
    <label className="flex shrink-0 items-center gap-1">
      <select aria-label={label} defaultValue={value} className="appearance-none bg-transparent text-xs text-[#111] outline-none">
        <option>{value}</option>
      </select>
      <Caret />
    </label>
  );
}

function Tool({ label, w, menu = false, on = false, children }: { label: string; w: "s" | "m"; menu?: boolean; on?: boolean; children: React.ReactNode }) {
  return (
    <button
      aria-label={label}
      className={`flex h-[22px] shrink-0 items-center justify-center gap-[3px] border ${w === "s" ? "w-[23px]" : "w-[29px]"} ${on ? "border-[#3399ff] bg-[#f2f8ff]" : "border-transparent"}`}
    >
      {children}
      {menu && <Caret />}
    </button>
  );
}

function Toolbar({ symbol, interval, alerts, show }: { symbol: string; interval: string; alerts: boolean; show: boolean }) {
  return (
    <div role="toolbar" aria-label="Chart tools" className="flex h-[25px] shrink-0 items-center overflow-hidden rounded-[2px] bg-linear-to-b from-white to-[#f1f1f1] pl-[3px]">
      <svg width="3" height="14" viewBox="0 0 3 14" className="shrink-0">
        <path d="M1 0v2M1 4v2M1 8v2M1 12v2" stroke="#b5b5b5" strokeWidth="2" />
      </svg>
      <span className="mr-[7px] ml-[6px] h-4 w-px shrink-0 bg-[#bdbdbd]" />
      <Drop label="Instrument" value={symbol} />
      <span className="w-2 shrink-0" />
      <Drop label="Interval" value={interval} />
      <span className="mr-px ml-[5px] h-4 w-px shrink-0 bg-[#bdbdbd]" />
      <Tool label="Bar style" w="m" menu><BarsIcon /></Tool>
      <Tool label="Drawing tools" w="m" menu><PencilIcon /></Tool>
      <Tool label="Zoom in" w="s"><LensIcon plus /></Tool>
      <Tool label="Zoom out" w="s"><LensIcon plus={false} /></Tool>
      <Sep />
      <Tool label="Cross hair" w="m" menu><CrossIcon /></Tool>
      <Tool label="Data box" w="s"><PageLensIcon /></Tool>
      <Sep />
      <Tool label="Chart trader" w="s" on={alerts}><OrdersIcon /></Tool>
      <Tool label="Data series" w="s"><CandlesIcon /></Tool>
      <Tool label="Indicators" w="s"><IndicatorIcon /></Tool>
      <Tool label="Strategies" w="s"><MoneyIcon off={alerts} /></Tool>
      <Tool label="Properties" w="s"><PropsIcon /></Tool>
      {show && (
        <>
          <Sep />
          <button className="ml-1 flex shrink-0 items-center gap-1.5 text-xs text-[#111]">
            Show <Caret />
          </button>
        </>
      )}
    </div>
  );
}

/* ------------------------------------------------------------------ window */

function Controls({ active, dim }: { active: boolean; dim: boolean }) {
  return (
    <div className="absolute top-0 right-[-1px] flex h-5 items-stretch">
      <button aria-label="Link" className="mr-2.5 w-[34px] border border-t-0 border-[#3399ff] bg-[#f0f0f0] text-xs leading-4 text-black">
        L
      </button>
      <button aria-label="Minimize" className="flex w-[26px] items-center justify-center pt-1">
        <span className="h-[3px] w-2 bg-[#1e1e1e]" />
      </button>
      <button aria-label="Maximize" className="flex w-[27px] items-center justify-center">
        <span className={`h-2 w-2.5 border border-t-2 ${dim ? "border-[#8a8a8a]" : "border-[#1e1e1e]"}`} />
      </button>
      <button aria-label="Close" className={`flex w-[45px] items-center justify-center ${active ? "bg-[#c75050]" : "bg-[#bcbcbc]"}`}>
        <svg width="8" height="7" viewBox="0 0 8 7">
          <path d="m.5 0 7 7M7.500 0l-7 7" stroke="#fff" strokeWidth="1.6" />
        </svg>
      </button>
    </div>
  );
}

type WinProps = {
  title: string;
  box: [number, number, number, number];
  head: number;
  symbol?: string;
  interval?: string;
  active?: boolean;
  dim?: boolean;
  alerts?: boolean;
  show?: boolean;
  full?: boolean;
  scroll?: boolean;
  thumb?: string;
  icon?: React.ReactNode;
  titleClass?: string;
  children?: React.ReactNode;
};

function Win(p: WinProps) {
  const [left, top, width, height] = p.box;
  return (
    <section
      aria-label={p.title}
      className={`absolute flex flex-col overflow-hidden border px-[7px] ${p.active ? "border-[#6b6b6b] bg-[#999999]" : "border-[#cdcdcd] bg-[#ebebeb]"}`}
      style={{ left, top, width, height }}
    >
      <header className="relative flex shrink-0 items-center pb-0.5" style={{ height: p.head }}>
        <span className="absolute left-[3px]">{p.icon ?? <AppIcon />}</span>
        <h2 className={`w-full text-sm whitespace-pre text-[#3c3c3c] ${p.titleClass ?? "text-center"}`}>{p.title}</h2>
        <Controls active={!!p.active} dim={!!p.dim} />
      </header>
      {p.symbol && <Toolbar symbol={p.symbol} interval={p.interval ?? ""} alerts={!!p.alerts} show={!!p.show} />}
      <div className="relative min-h-0 shrink overflow-hidden bg-black">
        {p.children}
        {p.alerts && (
          <button aria-label="Show chart trader" className="absolute top-0 right-0 flex size-[23px] items-center justify-center border border-[#6f7f96] bg-[#f2f2f2]">
            <svg width="8" height="5" viewBox="0 0 8 5"><path d="M0 0h8L4 5z" /></svg>
          </button>
        )}
        {p.full && (
          <button aria-label="Fixed scale" className="absolute top-[3px] right-px flex size-[13px] items-center justify-center border border-white bg-black text-[10px] font-bold text-white">
            F
          </button>
        )}
      </div>
      {p.scroll && (
        <div className="flex h-6 shrink-0 items-center justify-between bg-[#f0f0f0] px-1.5">
          <button aria-label="Scroll left"><Chevron back /></button>
          <span className={`h-full ${p.thumb ? "ml-auto mr-2 bg-[#b4b4b4]" : ""} ${p.thumb ?? ""}`} />
          <button aria-label="Scroll right"><Chevron /></button>
        </div>
      )}
    </section>
  );
}

/* ----------------------------------------------------------------- taskbar */

const Orb = () => (
  <svg width="36" height="36" viewBox="0 0 36 36">
    <defs>
      <radialGradient id="orb" cx=".5" cy=".85" r=".9">
        <stop offset="0" stopColor="#4fd0ff" />
        <stop offset=".45" stopColor="#1c69ad" />
        <stop offset="1" stopColor="#0d3566" />
      </radialGradient>
    </defs>
    <circle cx="18" cy="18" r="17" fill="url(#orb)" stroke="#234a73" />
    <path d="M4 13a15 15 0 0 1 28 0c-8 4-20 4-28 0" fill="#fff" opacity=".3" />
    <path d="M9 11c3-1.500 5-1.500 8 .500L15.500 18c-3-2-5-2-8-.500z" fill="#e8602c" />
    <path d="M18.500 12c3 2 6 2 9 .500L26 19c-3 1.500-6 1.500-9-.500z" fill="#8cc63e" />
    <path d="M7 19.500c3-1.500 5-1.500 8 .500l-1.500 6c-3-2-5-2-8-.500z" fill="#3d9be0" />
    <path d="M16.500 20c3 2 6 2 9 .500L24 27c-3 1.500-6 1.500-9-.500z" fill="#fdc82f" />
  </svg>
);
const ExplorerIcon = () => (
  <svg width="34" height="30" viewBox="0 0 34 30">
    <path d="M2 5h9l2 2h17v19H2z" fill="#e3b44e" />
    <path d="M6 1h7v5H6zM17 3h7v4h-7z" fill="#fff" />
    <path d="M5 1h3v3H5z" fill="#2fae2f" />
    <path d="M21 3h3v3h-3z" fill="#d9402b" />
    <path d="M1 9h31v17H1z" fill="#fbe292" />
    <path d="M1 9h31v8H1z" fill="#fdedb5" />
    <path d="M7 29v-9c0-2 1-3 3-3h16c2 0 3 1 3 3v9h-5v-7H12v7z" fill="#9fd4f1" stroke="#6fb4dd" />
  </svg>
);
const OfficeIcon = ({ letter, main }: { letter: string; main: string }) => (
  <svg width="32" height="30" viewBox="0 0 32 30">
    <path d="M5 3q1-2 4-2h13v24H2z" fill="#f6f8fc" stroke={main} />
    <path d="M5 3q1-2 4-2h2L8 27H2z" fill={main} opacity=".75" />
    <path d="m11 5 18-1 1 24-19-2z" fill="#fff" stroke={main} />
    <text x="12" y="18" fontSize="15" fontWeight="700" fontFamily="'Liberation Serif', serif" fill={main}>{letter}</text>
    <path d="M14 21h13M14 24h13M25 9h3M25 13h3M25 17h3" stroke={main} strokeWidth="1.5" />
  </svg>
);
const NinjaIcon = () => (
  <svg width="30" height="24" viewBox="0 0 30 24">
    <path d="M13 3C6 2 1 7 1 13c0 3 2 6 5 8 0-4 1-8 4-11l6 11V8l-3-4z" fill="#8a6a62" />
    <path d="M17 21c7 1 12-4 12-10 0-3-2-6-5-8 0 4-1 8-4 11L16 3v13z" fill="#c22020" />
  </svg>
);
const ExplorerWebIcon = () => (
  <svg width="32" height="30" viewBox="0 0 32 30">
    <path d="M27 18H11c0 6 9 7 11 3h5c-4 10-21 9-21-5C6 2 27 1 27 16zM11 13h11c-1-5-10-5-11 0" fill="#3fb2ec" stroke="#1c7fc2" strokeWidth=".7" />
    <path d="M6 28c-9-3 3-22 17-26 7-2 8 2 5 7 1-4-1-6-6-4C12 9 2 24 7 26c2 1 5-1 7-2-2 2-5 4-8 4" fill="#f6c52a" />
  </svg>
);

function Task({ label, lit = false, stack = 0, children }: { label: string; lit?: boolean; stack?: number; children: React.ReactNode }) {
  return (
    <div className="flex h-[37px]">
      <button aria-label={label} className={`flex items-center justify-center border ${stack ? "w-[52px]" : "w-[58px]"} ${lit ? "border-[#e4e4e4] bg-[#cfcfcf]" : "border-[#c4c4c4] bg-[#aaaaaa]"}`}>
        {children}
      </button>
      {Array.from({ length: stack }, (_, i) => (
        <span key={i} className="w-1 border border-l-0 border-[#c0c0c0] bg-[#a0a0a0]" />
      ))}
    </div>
  );
}

function Taskbar() {
  return (
    <footer className="absolute inset-x-0 bottom-0 flex h-10 items-center border-t-2 border-[#4b4b4b] bg-[#777777b0] text-white">
      <button aria-label="Start" className="ml-[9px] mr-[15px]"><Orb /></button>
      <nav aria-label="Open programs" className="flex gap-1">
        <Task label="Windows Explorer" stack={1}><ExplorerIcon /></Task>
        <Task label="Word"><OfficeIcon letter="W" main="#2a5699" /></Task>
        <Task label="OneNote"><OfficeIcon letter="n" main="#80397b" /></Task>
        <Task label="NinjaTrader" lit stack={2}><NinjaIcon /></Task>
        <Task label="Internet Explorer" stack={2}><ExplorerWebIcon /></Task>
      </nav>
      <div className="mr-[15px] ml-auto flex items-center gap-5 text-xs leading-4">
        <svg width="14" height="14" viewBox="0 0 14 14" aria-label="Volume">
          <path d="M0 4h3l4-4v14L3 10H0z" fill="#fff" />
          <path d="M9 4q2 3 0 6M11 2q3.500 5 0 10" fill="none" stroke="#fff" />
        </svg>
        <div className="w-[24px] text-center"><p>CES</p><p>CS</p></div>
        <div className="text-right"><p className="pr-3">18:33</p><p>8. 12. 2014</p></div>
      </div>
    </footer>
  );
}

/* --------------------------------------------------------------- utilities */

const run = (from: number, step: number, count: number, y0: number, dy: number, fmt: (n: number) => string): Mark[] =>
  Array.from({ length: count }, (_, i) => [fmt(from - i * step), Math.round(y0 + i * dy)] as Mark);
const whole = (n: number) => String(n);
const dec1 = (n: number) => n.toFixed(1).replace(".", ",");
const dec2 = (n: number) => n.toFixed(2).replace(".", ",");
const hours = (x: number): Mark[] => [13, 14, 15, 16, 17, 18].map((h, i) => [`${h}:00`, x + i * 60] as Mark);
const days = (x: number): Mark[] => ["12/3", "12/4", "12/5", "12/8"].map((d, i) => [d, x + i * 94] as Mark);

/* --------------------------------------------------------------------- app */

export default function App() {
  return (
    <main className="relative h-screen w-full overflow-hidden bg-[#4a4540] font-['Open_Sans','Noto_Sans',sans-serif]">
      <Win title="YM 12-14 (30 Min)  8. 12. 2014" box={[-6, 0, 526, 526]} head={30} symbol="YM 12-14" interval="30 Min">
        <Chart x={2} y={56} w={509} h={467} axis={461.5} base={497.5} prices={run(17980, 20, 12, 85, 34.6, whole)}
          times={days(98.5)} timeY={514} header="BarTimer(YM 12-14 (30 Min))" headerY={72} copyY={495} remain={["00:26:45", 312, 490]}
          lines={[["red", 178.5, 256], ["white", 193.5, 185], ["dash", 210.5, 256], ["red", 241.5, 258], ["dash", 257.5, 180], ["red", 272.5, 180], ["dash", 299.5, 174], ["red", 325.5, 178], ["red", 330.5, 3, 105], ["dash", 392.5], ["red", 459.5]]}
          tags={[{ text: "17888", y: 243, kind: "red" }]}
          under={
            <g fill="#fff" fillOpacity=".1" stroke="#fff">
              <rect x="182.5" y="179.5" width="70" height="62" />
              <rect x="160.5" y="231.5" width="16" height="58" />
              <rect x="128.5" y="272.5" width="44" height="52" />
            </g>
          }
          mid={<path d="M88 245 120 272 91 301" fill="none" stroke="#ccc" />}
          series={{ grid: { ox: 0, oy: 0, kx: 3, ky: 3 }, step: 6, runs: ym30 }}>
          <Stroke p={[363, 83, 426, 149]} />
          <Stroke p={[358, 149, 461, 149]} />
          <Scribble x0={362} y0={101} x1={415} y1={154} />
          <Scribble x0={310} y0={179} x1={356} y1={227} />
          <Scribble x0={397} y0={190} x1={450} y1={244} />
          <Note x={327} y={124}>CG</Note>
        </Chart>
      </Win>

      <Win title="YM 12-14 (3 Min)  8. 12. 2014" box={[513, 0, 451, 528]} head={30} symbol="YM 12-14" interval="3 Min" alerts>
        <Chart x={521} y={56} w={435} h={470} axis={906.5} base={499.5} prices={run(17955, 5, 17, 70, 25.3, whole)}
          times={hours(563.5)} timeY={516} header="BarTimer(YM 12-14 (3 Min)), PriceAlert(YM 12-14 (3 Min),0,True), PriceAlert(Y" headerY={72} copyY={497} remain={["00:02:45", 757, 492]}
          lines={[["yellow", 155.5], ["red", 217.5], ["white", 261.5], ["dash", 311.5], ["red", 401.5], ["dash", 448.5], ["red", 493.5]]}
          tags={[{ text: "17938", y: 155, kind: "yellow" }, { text: "17888", y: 408, kind: "red" }]}
          series={{ grid: { ox: 520, oy: 0, kx: 3, ky: 3 }, step: 9, runs: ym3 }} />
      </Win>

      <Win title="TF 12-14 (30 Min)  8. 12. 2014" box={[957, 1, 527, 527]} head={30} symbol="TF 12-14" interval="30 Min">
        <Chart x={965} y={57} w={510} h={470} axis={1421.5} base={500.5} prices={run(1190, 2, 12, 75, 21.3, dec1)}
          times={[["12/2", 988.5], ["12/3", 1074.5]]} timeY={516} header="BarTimer(TF 12-14 (30 Min))" headerY={73} copyY={498}
          lines={[["red", 67.5], ["dash", 88.5], ["red", 106.5], ["white", 159.5], ["white", 198.5, 1130], ["red", 222.5], ["white", 243.5, 1284], ["white", 269.5, 965, 1339], ["dash", 301.5], ["red", 369.5], ["white", 462.5]]}
          tags={[{ text: "1174,5", y: 239, kind: "red" }]}
          mid={<path d="M1232 198 1278 244 1240 296" fill="none" stroke="#ccc" />}
          series={{ grid: { ox: 960, oy: 0, kx: 3, ky: 3 }, step: 6, runs: tf30 }} />
      </Win>

      <Win title="TF 12-14 (3 Min)  8. 12. 2014" box={[1477, 0, 451, 528]} head={29} symbol="TF 12-14" interval="3 Min" alerts>
        <Chart x={1485} y={55} w={435} h={471} axis={1867.5} base={501.5} prices={run(1189, 1, 17, 85, 24.8, dec1)}
          times={[["18:00", 1824.5]]} timeY={518} header="BarTimer(TF 12-14 (3 Min)), PriceAlert(TF 12-14 (3 Min),0,True), PriceAlert(TF" headerY={71} remain={["00:02:45", 1718, 494]}
          lines={[["dash", 90.5], ["red", 133.5], ["yellow", 255.5], ["white", 258.5], ["white", 347.5], ["red", 404.5], ["white", 453.5]]}
          tags={[{ text: "1182,1", y: 255, kind: "yellow" }, { text: "1174,5", y: 444, kind: "red" }]}
          series={{ grid: { ox: 1470, oy: 0, kx: 3, ky: 2.958 }, step: 9, runs: tf3 }} />
      </Win>

      <Win title="ES 12-14 (30 Min)  8. 12. 2014" box={[959, 525, 527, 549]} head={30} symbol="ES 12-14" interval="30 Min" scroll>
        <Chart x={967} y={581} w={511} h={460} axis={1421.5} base={1015.5} prices={[]}
          times={[["12/3", 1052.5], ["12/4", 1146.5]]} timeY={1032} header="BarTimer(ES 12-14 (30 Min))" headerY={598} copyY={1012}
          lines={[["white", 699.5], ["white", 762.5, 1012], ["white", 833.5], ["white", 959.5]]}
          series={{ grid: { ox: 960, oy: 500, kx: 3, ky: 2.703 }, step: 6, runs: es30 }} />
      </Win>

      <Win title="ES 12-14 (3 Min)  8. 12. 2014" box={[1475, 526, 451, 548]} head={30} symbol="ES 12-14" interval="3 Min" alerts scroll thumb="w-[17px]">
        <Chart x={1483} y={582} w={435} h={458} axis={1857.5} base={1013.5} prices={run(2076, 1, 13, 603, 33, dec2)}
          times={[["18:00", 1814.5]]} timeY={1030} header="PriceAlert" headerX={1809} headerY={598} remain={["00:02:45", 1708, 1006]}
          lines={[["yellow", 684.5], ["white", 717.5], ["white", 866.5]]}
          tags={[{ text: "2073,50", y: 684, kind: "yellow" }, { text: "2066,00", y: 931, kind: "red" }]}
          series={{ grid: { ox: 1770, oy: 520, kx: 3, ky: 2.8 }, step: 9, runs: es3 }} />
      </Win>

      <Win title="NQ 12-14 (3 Min)  8. 12. 2014" box={[513, 526, 452, 548]} head={28} symbol="NQ 12-14" interval="3 Min" alerts scroll thumb="w-[17px]">
        <Chart x={521} y={580} w={436} h={461} axis={896.5} base={1015.5} prices={run(4325, 5, 10, 610, 41.7, dec2)}
          times={hours(553.5)} timeY={1032} header="BarTimer(NQ 12-14 (3 Min)), PriceAlert(NQ 12-14 (3 Min),0,True), PriceAlert" headerY={598} copyY={1012} remain={["00:02:45", 747, 1008]}
          lines={[["dash", 609.5], ["red", 660.5], ["yellow", 661.5], ["red", 683.5], ["dot", 709.5], ["red", 732.5], ["red", 783.5], ["dash", 834.5], ["red", 889.5]]}
          tags={[{ text: "4318,75", y: 661, kind: "yellow" }, { text: "4284,50", y: 947, kind: "red" }]}
          series={{ grid: { ox: 520, oy: 520, kx: 3, ky: 2.8 }, step: 9, runs: nq3 }}>
          <Stroke p={[708, 646, 810, 646]} />
          <g fill="#e00000">
            <path d="M732 638h4v8h3l-5.500 7-5.500-7h4zM771 638h4v8h3l-5.500 7-5.500-7h4zM728 668l6 5-6 5zM768 663l5 5-5 5z" />
          </g>
          <path d="M746 752h5v-8h3l-5.500-7-5.500 7h3zM863 771h5v-8h3l-5.500-7-5.500 7h3zM754 728v10l-5-5zM871 746v10l-5-5z" fill="#0a7a14" />
          <g fill="#fff" textAnchor="middle">
            <text x="732" y="620">Entry</text>
            <text x="733" y="632">1 @ 4317,50</text>
            <text x="771" y="620">Entry</text>
            <text x="773" y="632">1 @ 4318,00</text>
            <text x="749" y="766">Target1</text>
            <text x="748" y="778">1 @ 4310,25</text>
            <text x="866" y="785">Target1</text>
            <text x="865" y="797">1 @ 4308,00</text>
          </g>
          <Scribble x0={798} y0={684} x1={872} y1={745} />
          <Arrow p={[753, 866, 811, 749]} />
          <Note x={792} y={652}>DT</Note>
          <Note x={681} y={882}>ZAHUŠTĚNÍ PŘESNĚ V CG</Note>
          <Note x={525} y={925}>SUMA:336,96 USD/PAPER</Note>
        </Chart>
      </Win>

      <Win title="NQ 12-14 (30 Min)  8. 12. 2014" box={[-3, 523, 522, 551]} head={30} symbol="NQ 12-14" interval="30 Min" active scroll thumb="w-[32px]">
        <Chart x={5} y={579} w={506} h={461} axis={450.5} base={1015.5} prices={run(4330, 5, 11, 596, 38.9, dec2)}
          times={days(87.5)} timeY={1032} header="BarTimer(NQ 12-14 (30 Min))" headerY={595} copyY={1012} remain={["00:26:45", 301, 1008]}
          lines={[["dash", 634.5], ["red", 682.5], ["red", 703.5, 348], ["dot", 727.5, 346], ["red", 749.5, 168], ["red", 797.5, 27], ["dash", 844.5, 19], ["red", 896.5, 26]]}
          tags={[{ text: "4284,50", y: 949, kind: "red" }]}
          series={{ grid: { ox: 0, oy: 520, kx: 3, ky: 2.8 }, step: 6, runs: nq30 }}>
          <Scribble x0={307} y0={647} x1={356} y1={696} />
          <Scribble x0={389} y0={807} x1={442} y1={867} />
          <Arrow p={[196, 866, 423, 685]} />
          <Stroke p={[422, 670, 443, 688]} />
          <Note x={364} y={692}>CG</Note>
          <Note x={360} y={837}>CG</Note>
          <Note x={136} y={883}>SPODNÍ HRANA VĚTŠÍHO CG</Note>
        </Chart>
      </Win>

      <Taskbar />

      <Win title="NQ 12-14 (1 Min)  8. 12. 2014" box={[1077, 280, 733, 542]} head={30} symbol="NQ 12-14" interval="1 Min" show full scroll>
        <Chart x={1085} y={336} w={717} h={454} axis={1741.5} base={763.5} prices={run(4324, 2, 17, 357, 24.35, dec2)}
          times={[["", 1105.5]]} timeY={781} header="© 2011-2014 Ludvik Turek's Market Profile Plus v.2.5.4 [Minute 60]" headerY={352} copyY={761}
          lines={[]}
          under={<HourProfiles />}
          mid={
            <>
              <HLine line={["red", 453.5]} from={1086} to={1741} />
              <HLine line={["dot", 490.5]} from={1086} to={1741} />
              <HLine line={["red", 524.5]} from={1086} to={1741} />
              <HLine line={["red", 598.5]} from={1086} to={1741} />
              <HLine line={["dash", 672.5]} from={1086} to={1741} />
              <HLine line={["red", 753.5]} from={1086} to={1741} />
            </>
          }>
          <text x="1086" y="781" fill="#fff">. 2014 16:00</text>
          <Stroke p={[1374, 436, 1504, 470]} />
          <Stroke p={[1391, 536, 1499, 510]} />
          <Arrow p={[1473, 582, 1365, 537]} />
          <Scribble x0={1357} y0={331} x1={1416} y1={368} />
          <Note x={1329} y={586}>ÚZKÝ DLOUHÝ PROFIL, KTERÝ ZNAČÍ</Note>
          <Note x={1335} y={602}>ROVNOVÁHU A MOŽNÉ PRORAŽENÍ</Note>
        </Chart>
      </Win>

      <Win title="NQ 12-14 (1 Min)  8. 12. 2014" box={[1206, 631, 580, 460]} head={30} symbol="NQ 12-14" interval="1 Min" show full>
        <Chart x={1214} y={687} w={564} h={404} axis={1717.5} base={1079.5}
          prices={[["", 697], ["4335,00", 726], ["4330,00", 756], ["4325,00", 785], ["4320,00", 814], ["4315,00", 843], ["4310,00", 873], ["4305,00", 903], ["4300,00", 932], ["4295,00", 961], ["4290,00", 991], ["4280,00", 1050]]}
          header="© 2011-2014 Ludvik Turek's Market Profile Plus v.2.5.4 [Day 1]" headerY={703} lines={[]}
          tags={[{ text: "4284,50", y: 1022, kind: "red" }]}
          under={<DayProfiles />}
          mid={
            <>
              <HLine line={["red", 836.5]} from={1215} to={1717} />
              <HLine line={["dot", 854.5]} from={1215} to={1717} />
              <HLine line={["red", 871.5]} from={1215} to={1717} />
              <HLine line={["red", 907.5]} from={1215} to={1717} />
              <HLine line={["dash", 943.5]} from={1215} to={1717} />
              <HLine line={["red", 982.5]} from={1215} to={1717} />
            </>
          }>
          <Scribble x0={1484} y0={684} x1={1525} y1={719} />
        </Chart>
      </Win>

      <Win title="Sim101" box={[1172, 1046, 327, 60]} head={30} dim icon={<GridIcon />}>
        <div className="flex h-7 gap-[5px] bg-[#6f7f92] px-1 pt-px">
          <span className="w-[38px] bg-[#a8a8a8]" />
          <span className="flex flex-1 divide-x divide-[#666] bg-[#a8a8a8]">
            <span className="w-[60px]" />
            <span className="w-[94px]" />
          </span>
          <span className="w-[45px]" />
        </div>
      </Win>
      <Win title="T" box={[1517, 1049, 200, 60]} head={30} icon={<GridIcon blue />} titleClass="pl-9">
        <div className="h-7 bg-[#a8a8a8]" />
      </Win>
    </main>
  );
}
